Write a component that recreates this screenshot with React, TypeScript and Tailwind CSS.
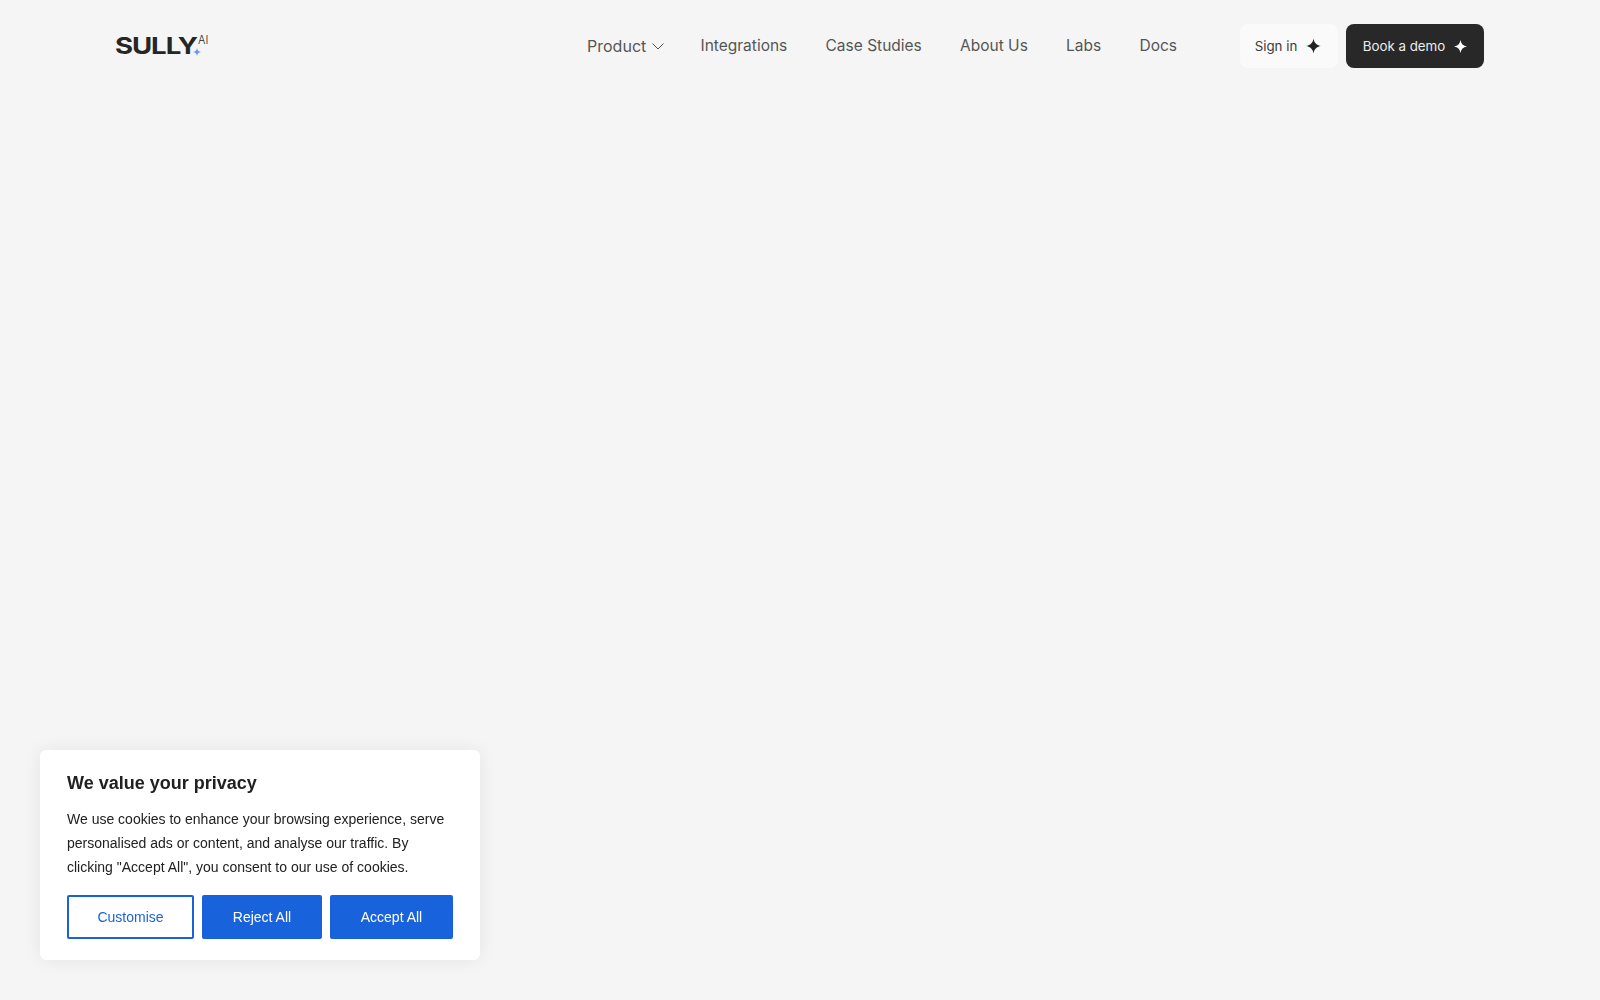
import React from "react";

const inter = "font-['Inter',sans-serif]";
const helv = "font-['Liberation_Sans',Arial,sans-serif]";

function Sparkle({ className }: { className?: string }) {
  return (
    <svg viewBox="0 0 16 16" className={className} fill="currentColor" aria-hidden="true">
      <path d="M8 0C8.7 4.6 11.2 7.2 16 8 11.2 8.8 8.7 11.4 8 16 7.3 11.4 4.8 8.8 0 8 4.8 7.2 7.3 4.6 8 0Z" />
    </svg>
  );
}

function Logo() {
  return (
    <div className="relative -ml-[1px] flex h-[24px] w-[94px] items-center">
      <span className={`${inter} origin-left scale-x-[1.2] text-[23px] leading-none font-bold tracking-[-0.9px] text-[#262626]`}>SULLY</span>
      <span className={`${inter} absolute top-[0px] left-[83px] text-[11px] leading-[12px] font-light text-[#262626]`}>AI</span>
      <Sparkle className="absolute top-[14px] left-[78px] h-[8px] w-[8px] text-[#6a9ce8]" />
    </div>
  );
}

const links = ["Integrations", "Case Studies", "About Us", "Labs", "Docs"];

export default function App() {
  return (
    <div className="min-h-[1000px] bg-[#f5f5f5]">
      <header className="flex h-[92px] items-center pr-[116px] pl-[116px]">
        <Logo />
        <nav className={`${inter} ml-auto flex items-center gap-[38.25px] text-[15.5px] leading-[24px] text-[#555555]`}>
          <a className="-mr-[2px] flex items-center gap-[6px] text-[16px]">
            Product
            <svg viewBox="0 0 12 7" className="mt-[1px] h-[7px] w-[12px]" fill="none" stroke="currentColor" strokeWidth="1">
              <path d="M0.5 0.5l5.5 5.5 5.5-5.5" />
            </svg>
          </a>
          {links.map((l) => (
            <a key={l} className="pb-[1px]">{l}</a>
          ))}
        </nav>
        <div className={`${inter} ml-[63px] flex items-center gap-[8px] text-[13.33px] leading-[20px]`}>
          <a className="flex h-[44px] w-[98px] items-center justify-center gap-[9px] rounded-[8px] bg-[#fafafa] pr-[2px] text-[#3a3a3a]">
            Sign in
            <Sparkle className="h-[16px] w-[15px] text-[#232323]" />
          </a>
          <a className="flex h-[44px] w-[138px] items-center justify-center gap-[9px] rounded-[8px] bg-[#282828] text-[#ededed]">
            Book a demo
            <Sparkle className="h-[13px] w-[13px] text-[#ffffff]" />
          </a>
        </div>
      </header>

      <aside className={`${helv} fixed bottom-[40px] left-[40px] w-[440px] rounded-[6px] bg-white px-[27px] pt-[22px] pb-[21px] shadow-[0_0_18px_rgba(0,0,0,0.07)]`}>
        <h2 className="text-[18px] leading-[22px] font-bold text-[#212121]">We value your privacy</h2>
        <p className="mt-[13px] text-[14px] leading-[24px] text-[#212121]">
          We use cookies to enhance your browsing experience, serve personalised ads or content, and analyse our traffic. By clicking "Accept All", you consent to our use of cookies.
        </p>
        <div className="mt-[16px] flex gap-[8px] text-[14px] leading-[20px]">
          <button className="h-[44px] w-[127px] rounded-[2px] border-2 border-[#1863dc] bg-white text-[#1863dc]">Customise</button>
          <button className="h-[44px] w-[120px] rounded-[2px] border-2 border-[#1863dc] bg-[#1863dc] text-white">Reject All</button>
          <button className="h-[44px] w-[123px] rounded-[2px] border-2 border-[#1863dc] bg-[#1863dc] text-white">Accept All</button>
        </div>
      </aside>
    </div>
  );
}
